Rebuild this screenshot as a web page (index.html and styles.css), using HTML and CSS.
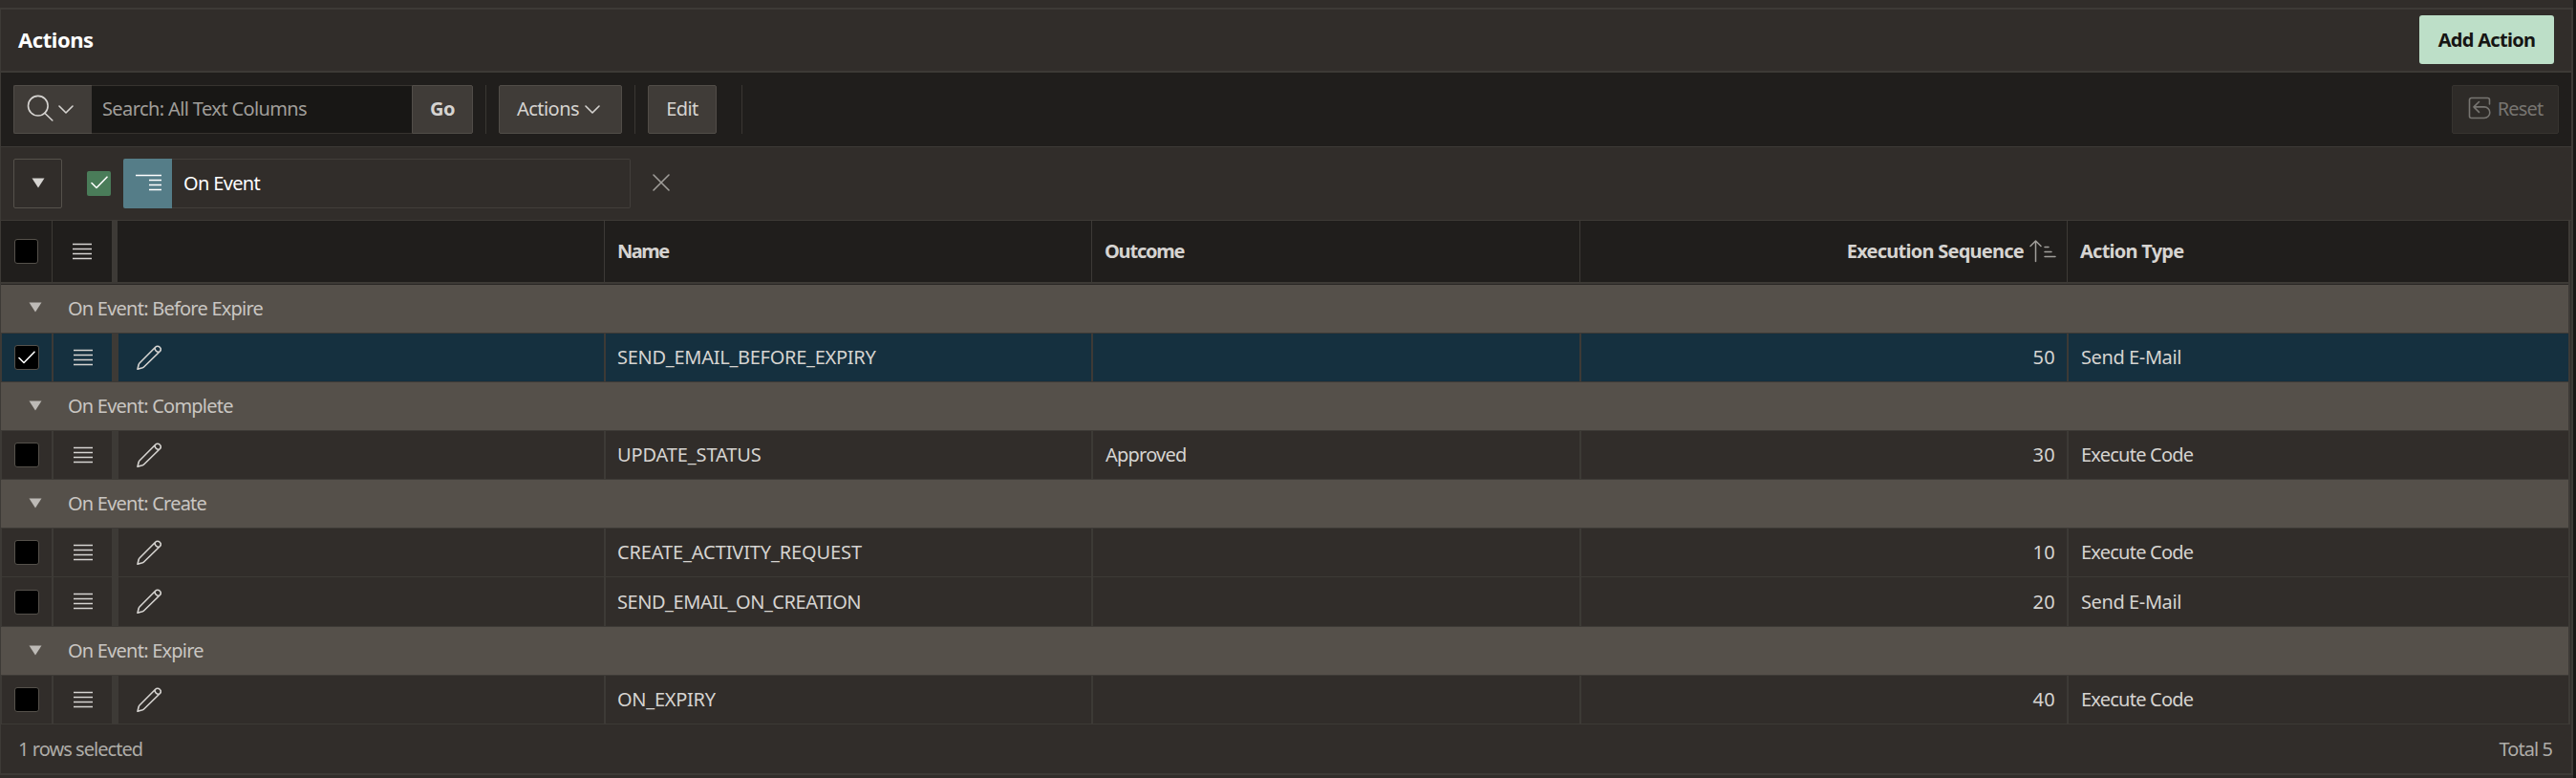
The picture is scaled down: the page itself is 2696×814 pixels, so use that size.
FILE: index.html
```
<!DOCTYPE html>
<html lang="en">
<head>
<meta charset="utf-8">
<title>Actions</title>
<link rel="stylesheet" href="styles.css">
</head>
<body>
<svg class="defs" aria-hidden="true">
  <symbol id="i-menu" viewBox="0 0 20 20"><path d="M0.500 2.500h19M0.500 7.500h19M0.500 12.500h19M0.500 17.500h19"/></symbol>
  <symbol id="i-pencil" viewBox="0 0 26 26"><path d="M1 25.200L2.200 20.300Q2.500 19.400 3.200 18.700L19.600 2.200A3.250 3.250 0 0 1 24.200 6.800L7.800 22.800Q7.100 23.500 6.200 23.800ZM19.200 2.700C18.600 4.800 20.900 7.800 23.700 7.200"/></symbol>
  <symbol id="i-down" viewBox="0 0 14 11"><path d="M0.500 0.500h13L7 10.500Z"/></symbol>
  <symbol id="i-chev" viewBox="0 0 16 9"><path d="M1 1l7 7 7-7"/></symbol>
  <symbol id="i-check" viewBox="0 0 18 14"><path d="M1 7.500l5 5L17 1.200"/></symbol>
</svg>

<section class="panel">
  <header class="head">
    <h1 class="title">Actions</h1>
    <button class="btn btn-hot">Add Action</button>
  </header>

  <div class="toolbar">
    <div class="search">
      <button class="btn search-type">
        <svg class="line" width="28" height="28" viewBox="0 0 28 28"><circle cx="11.800" cy="11.700" r="10.300"/><path d="M18.800 19.200l8 7.800"/></svg>
        <svg class="line chev" width="16" height="9"><use href="#i-chev"/></svg>
      </button>
      <div class="input">Search: All Text Columns</div>
      <button class="btn go">Go</button>
    </div>
    <span class="sep"></span>
    <button class="btn menu">Actions<svg class="line chev" width="16" height="9"><use href="#i-chev"/></svg></button>
    <span class="sep"></span>
    <button class="btn edit">Edit</button>
    <span class="sep sep-last"></span>
    <button class="btn reset">
      <svg class="line" width="24" height="24" viewBox="0 0 24 24"><path d="M22.500 8V3.500a2 2 0 0 0-2-2h-17a2 2 0 0 0-2 2v17a2 2 0 0 0 2 2H17a5.800 5.800 0 0 0 0-11.600H6.500M11.500 5.500L6 10.900l5.500 5.500"/></svg>
      <span>Reset</span>
    </button>
  </div>

  <div class="controls">
    <button class="toggle"><svg class="fill" width="14" height="11"><use href="#i-down"/></svg></button>
    <span class="on"><svg class="line" width="18" height="14"><use href="#i-check"/></svg></span>
    <div class="break">
      <span class="break-icon"><svg width="27" height="18" viewBox="0 0 27 18"><path d="M0 1.500h27M14 6.500h13M14 11.500h13M14 16.500h13"/></svg></span>
      <span class="break-name">On Event</span>
    </div>
    <svg class="line close" width="18" height="18" viewBox="0 0 18 18"><path d="M1 1l16 16M17 1L1 17"/></svg>
  </div>

  <div class="grid">
    <div class="row thead">
      <div class="c"><span class="box"></span></div>
      <div class="c"><svg class="line menu-icon" width="20" height="20"><use href="#i-menu"/></svg></div>
      <div class="c"></div>
      <div class="c name">Name</div>
      <div class="c outcome">Outcome</div>
      <div class="c num seq">Execution Sequence
        <svg class="line sort" width="27" height="23" viewBox="0 0 27 23"><path d="M6.500 22.500V1M1 6.500L6.500 1l5.500 5.500M16 7.500h4M16 12.500h7M16 17.500h11"/></svg>
      </div>
      <div class="c type">Action Type</div>
    </div>

    <div class="group first"><svg class="fill" width="14" height="11"><use href="#i-down"/></svg>On Event: Before Expire</div>
    <div class="row selected">
      <div class="c"><span class="box"><svg class="line" width="18" height="14"><use href="#i-check"/></svg></span></div>
      <div class="c"><svg class="line menu-icon" width="20" height="20"><use href="#i-menu"/></svg></div>
      <div class="c"><svg class="line pencil" width="26" height="26"><use href="#i-pencil"/></svg></div>
      <div class="c code">SEND_EMAIL_BEFORE_EXPIRY</div>
      <div class="c"></div>
      <div class="c num">50</div>
      <div class="c mail">Send E-Mail</div>
    </div>

    <div class="group"><svg class="fill" width="14" height="11"><use href="#i-down"/></svg>On Event: Complete</div>
    <div class="row">
      <div class="c"><span class="box"></span></div>
      <div class="c"><svg class="line menu-icon" width="20" height="20"><use href="#i-menu"/></svg></div>
      <div class="c"><svg class="line pencil" width="26" height="26"><use href="#i-pencil"/></svg></div>
      <div class="c code status">UPDATE_STATUS</div>
      <div class="c">Approved</div>
      <div class="c num">30</div>
      <div class="c">Execute Code</div>
    </div>

    <div class="group"><svg class="fill" width="14" height="11"><use href="#i-down"/></svg>On Event: Create</div>
    <div class="row">
      <div class="c"><span class="box"></span></div>
      <div class="c"><svg class="line menu-icon" width="20" height="20"><use href="#i-menu"/></svg></div>
      <div class="c"><svg class="line pencil" width="26" height="26"><use href="#i-pencil"/></svg></div>
      <div class="c code status">CREATE_ACTIVITY_REQUEST</div>
      <div class="c"></div>
      <div class="c num">10</div>
      <div class="c">Execute Code</div>
    </div>
    <div class="row last">
      <div class="c"><span class="box"></span></div>
      <div class="c"><svg class="line menu-icon" width="20" height="20"><use href="#i-menu"/></svg></div>
      <div class="c"><svg class="line pencil" width="26" height="26"><use href="#i-pencil"/></svg></div>
      <div class="c code creation">SEND_EMAIL_ON_CREATION</div>
      <div class="c"></div>
      <div class="c num">20</div>
      <div class="c mail">Send E-Mail</div>
    </div>

    <div class="group"><svg class="fill" width="14" height="11"><use href="#i-down"/></svg>On Event: Expire</div>
    <div class="row">
      <div class="c"><span class="box"></span></div>
      <div class="c"><svg class="line menu-icon" width="20" height="20"><use href="#i-menu"/></svg></div>
      <div class="c"><svg class="line pencil" width="26" height="26"><use href="#i-pencil"/></svg></div>
      <div class="c code">ON_EXPIRY</div>
      <div class="c"></div>
      <div class="c num">40</div>
      <div class="c">Execute Code</div>
    </div>
  </div>

  <footer class="foot"><span>1 rows selected</span><span>Total 5</span></footer>
</section>
</body>
</html>
```
FILE: styles.css
```
:root {
  --surface: #312d2a;
  --dark: #201e1c;
  --line: #3d3a36;
  --group: #55504a;
  --button: #403c38;
  --button-line: #514d48;
  --text: #d6d4d1;
}

* { box-sizing: border-box; }

body {
  margin: 0;
  height: 814px;
  overflow: hidden;
  padding: 8px 3px 3px 0;
  background: linear-gradient(90deg, var(--surface) 2693px, #191816 2693px);
  color: var(--text);
  font-family: "Noto Sans", "Open Sans", sans-serif;
  font-size: 20px;
  line-height: 24px;
}

.defs { position: absolute; width: 0; height: 0; }

svg { display: block; flex: none; overflow: visible; }
.line { fill: none; stroke: currentColor; stroke-width: 1.6; stroke-linecap: round; stroke-linejoin: round; }
.fill { fill: #bdbab6; }

button { font: inherit; color: inherit; }

.panel {
  height: 803px;
  border: 2px solid var(--line);
  border-left-width: 1px;
  background: var(--surface);
}

.head {
  height: 66px;
  padding: 0 18px 0 18px;
  display: flex;
  align-items: flex-start;
  justify-content: space-between;
  border-bottom: 2px solid var(--line);
}

.title {
  margin: 17px 0 0;
  color: #fff;
  font-size: 22px;
  font-weight: 700;
  line-height: 28px;
  letter-spacing: -0.45px;
}

.btn {
  height: 51px;
  padding: 0 0 2px;
  display: flex;
  align-items: center;
  justify-content: center;
  border: 1px solid var(--button-line);
  border-radius: 2px;
  background: var(--button);
  letter-spacing: -0.55px;
}

.btn-hot {
  width: 141px;
  margin-top: 6px;
  padding-bottom: 0;
  border: 0;
  border-radius: 3px;
  background: #bddfc8;
  color: #161513;
  font-weight: 700;
  letter-spacing: -0.7px;
}

.toolbar {
  height: 78px;
  padding: 13px 13px 0;
  display: flex;
  background: var(--dark);
  border-bottom: 1px solid var(--line);
}

.search { display: flex; height: 51px; }
.search-type { width: 82px; gap: 5px; border-radius: 2px 0 0 2px; border-right: 0; padding: 0 6px 3px 0; }
.search-type .chev { margin-top: 3px; }
.input {
  width: 335px;
  padding: 12px 0 0 11px;
  border: 1px solid #36332f;
  border-width: 1px 0;
  background: #181715;
  color: #a09e9a;
  letter-spacing: -0.61px;
}
.go { width: 64px; border-radius: 0 2px 2px 0; font-weight: 700; letter-spacing: -0.4px; }
.sep { width: 1px; height: 51px; margin: 0 13px; background: #3a3733; }
.menu { width: 129px; gap: 6px; padding-right: 4px; }
.menu .chev { margin-top: 1px; }
.edit { width: 72px; }
.sep-last { margin-left: 26px; }
.reset {
  width: 112px;
  gap: 7px;
  margin-left: auto;
  border-color: #373430;
  background: #2e2b28;
  color: #777571;
  letter-spacing: -0.85px;
}
.reset svg { margin-top: -1px; }

.controls {
  height: 77px;
  padding: 12px 13px 0;
  display: flex;
  border-bottom: 1px solid var(--line);
}

.toggle {
  width: 51px;
  height: 52px;
  padding: 0 0 2px;
  display: grid;
  place-items: center;
  border: 1px solid #55514b;
  border-radius: 2px;
  background: none;
}
.toggle .fill { fill: #d6d4d1; }

.on {
  width: 25px;
  height: 26px;
  margin: 13px 13px 0 26px;
  padding-bottom: 2px;
  display: grid;
  place-items: center;
  border-radius: 2px;
  background: #4a7c59;
  color: #fff;
}

.break {
  width: 531px;
  height: 52px;
  display: flex;
  border: 1px solid #423e3a;
  border-left: 0;
  border-radius: 2px;
  color: #fff;
}
.break-icon {
  width: 51px;
  height: 52px;
  margin-top: -1px;
  padding-left: 13px;
  display: flex;
  align-items: center;
  border-radius: 2px 0 0 2px;
  background: #557d88;
}
.break-icon svg { fill: none; stroke: #fff; stroke-width: 1.6; margin-bottom: 2px; }
.break-name { padding: 13px 0 0 12px; letter-spacing: -0.66px; }
.close { margin: 16px 0 0 23px; color: #a09e9a; }

.grid { width: 2689px; border-right: 2px solid var(--line); }

.row {
  height: 51px;
  display: grid;
  grid-template-columns: 53px 63px 515px 510px 511px 510px 1fr;
  background: var(--surface);
  border-bottom: 1px solid var(--line);
}
.c {
  min-width: 0;
  padding: 0 12px 0 13px;
  display: flex;
  align-items: center;
  border-left: 2px solid var(--line);
  letter-spacing: -0.77px;
}
.c:nth-child(1) { border-left-width: 1px; padding: 0 0 0 13px; }
.c:nth-child(2) { padding: 0 0 0 21px; }
.c:nth-child(3) { border-left-width: 7px; padding-left: 19px; }
.c.code { padding-left: 12px; letter-spacing: -0.27px; }
.c.status { letter-spacing: -0.12px; }
.c.creation { letter-spacing: -0.45px; }
.c.mail { letter-spacing: -0.4px; }
.c.num { justify-content: flex-end; letter-spacing: 0.3px; }
.pencil, .menu-icon { margin-bottom: 1px; }
.selected { background: #15303f; }
.last { height: 52px; }

.thead {
  height: 66px;
  background: var(--dark);
  border-bottom: 2px solid var(--line);
  box-shadow: 0 1px 0 #2a2725;
  position: relative;
  font-weight: 700;
}
.thead .c { border-left-width: 1px; letter-spacing: -0.75px; }
.thead .c:nth-child(1) { border-left: 0; padding-left: 14px; }
.thead .c:nth-child(3) { border-left-width: 6px; }
.thead .name { letter-spacing: -1.5px; }
.thead .outcome { letter-spacing: -1.2px; }
.thead .sort { margin: -2px 0 0 6px; color: #a09e9a; stroke-width: 1.5; }

.box {
  width: 26px;
  height: 26px;
  display: grid;
  place-items: center;
  border: 1px solid #55514b;
  border-radius: 3px;
  background: #000;
  color: #fff;
}
.thead .box { width: 25px; }

.group {
  height: 51px;
  padding-left: 29px;
  display: flex;
  align-items: center;
  gap: 27px;
  background: var(--group);
  border-bottom: 1px solid var(--line);
  color: #c9c6c2;
  letter-spacing: -0.77px;
}
.group.first { height: 52px; }
.group svg { margin-bottom: 2px; }

.foot {
  height: 51px;
  padding: 0 20px 0 18px;
  display: flex;
  align-items: center;
  justify-content: space-between;
  color: #aeaca8;
  letter-spacing: -0.95px;
}
```
